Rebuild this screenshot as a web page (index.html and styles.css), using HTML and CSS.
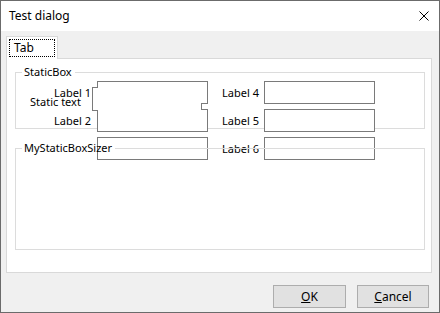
FILE: index.html
```html
<!DOCTYPE html>
<html lang="en">
<head>
    <meta charset="UTF-8">
    <title>Test dialog</title>
    <link rel="stylesheet" href="styles.css">
</head>
<body>
    <div class="window">
        <div class="titlebar">
            <span class="title">Test dialog</span>
            <span class="close">
                <svg width="10" height="10" viewBox="0 0 10 10">
                    <path d="M0.5 0.5 L9.5 9.5 M9.5 0.5 L0.5 9.5" stroke="#000" stroke-width="1" fill="none"/>
                </svg>
            </span>
        </div>
        <div class="client">
            <div class="notebook">
                <div class="tabs">
                    <div class="tab"><span class="tab-label">Tab</span></div>
                </div>
                <div class="page">
                    <fieldset class="staticbox first"><legend>StaticBox</legend></fieldset>
                    <fieldset class="staticbox second"><legend>MyStaticBoxSizer</legend></fieldset>

                    <!-- controls are laid over the boxes, as the dialog draws them -->
                    <div class="controls">
                        <span class="label">Label 1</span>
                        <div class="field"></div>
                        <span class="label">Label 4</span>
                        <div class="field"></div>

                        <span class="label">Label 2</span>
                        <div class="field"></div>
                        <span class="label">Label 5</span>
                        <div class="field"></div>

                        <span class="label"></span>
                        <div class="field"></div>
                        <span class="label">Label 6</span>
                        <div class="field"></div>

                        <span class="static-label">Static text</span>
                        <div class="field static-field"></div>
                    </div>
                </div>
            </div>
            <div class="buttons">
                <button class="btn ok"><u>O</u>K</button>
                <button class="btn cancel"><u>C</u>ancel</button>
            </div>
        </div>
    </div>
</body>
</html>
```

FILE: styles.css
```css
html, body {
    margin: 0;
    padding: 0;
}

body {
    font-family: "Noto Sans", "Open Sans", sans-serif;
    font-size: 11px;
    line-height: 16px;
    color: #000;
}

.window {
    width: 440px;
    height: 313px;
    box-sizing: border-box;
    border: 1px solid #6b6b6b;
    display: flex;
    flex-direction: column;
    background-color: #f0f0f0;
}

.titlebar {
    height: 30px;
    background-color: #fff;
    display: flex;
    align-items: center;
    justify-content: space-between;
    padding: 0 10px 0 8px;
}

.title {
    font-size: 12px;
}

.close {
    display: flex;
}

.client {
    flex: 1;
    display: flex;
    flex-direction: column;
    padding-top: 5px;
}

.notebook {
    margin: 0 7px 0 5px;
}

.tabs {
    display: flex;
}

.tab {
    width: 52px;
    height: 23px;
    box-sizing: border-box;
    border: 1px solid #d9d9d9;
    border-bottom: none;
    background-color: #fff;
    margin-bottom: -1px;
    position: relative;
    z-index: 1;
    padding: 2px 2px 1px 2px;
}

.tab-label {
    display: block;
    height: 18px;
    box-sizing: border-box;
    border: 1px dotted #000;
    padding: 0 0 0 4px;
    line-height: 16px;
    font-size: 12px;
}

.page {
    height: 215px;
    box-sizing: border-box;
    border: 1px solid #d9d9d9;
    background-color: #fff;
    position: relative;
    display: flex;
    flex-direction: column;
}

.staticbox {
    margin: 0 6px 0 8px;
    padding: 0 0 0 6px;
    border: 1px solid #dcdcdc;
    min-width: 0;
    box-sizing: border-box;
}

.staticbox legend {
    padding: 0 3px 0 2px;
    line-height: 16px;
}

.staticbox.first {
    margin-top: 5px;
    height: 65px;
}

.staticbox.second {
    margin-top: 11px;
    height: 110px;
    position: relative;
    z-index: 2;
}

.controls {
    position: absolute;
    left: 8px;
    top: 22px;
    z-index: 1;
    display: grid;
    grid-template-columns: 82px 111px 56px 111px;
    grid-auto-rows: 23px;
    row-gap: 5px;
}

.label {
    align-self: center;
    text-align: right;
    padding-right: 6px;
    line-height: 10px;
    white-space: nowrap;
}

.controls .label:nth-child(4n+3) {
    padding-right: 5px;
}

.field {
    position: relative;
    box-sizing: border-box;
    border: 1px solid #7a7a7a;
}

/* white insides sit above every border, so only the outer outline shows */
.field::after {
    content: "";
    position: absolute;
    inset: 0;
    background-color: #fff;
    z-index: 1;
}

.static-field {
    position: absolute;
    left: 77px;
    top: 6px;
    width: 110px;
    height: 24px;
}

.static-label {
    position: absolute;
    left: 15px;
    top: 16px;
    line-height: 10px;
    white-space: nowrap;
}

.buttons {
    display: flex;
    justify-content: flex-end;
    gap: 11px;
    margin-top: 12px;
    padding-right: 10px;
}

.btn {
    height: 23px;
    padding: 0;
    border: 1px solid #adadad;
    background-color: #e1e1e1;
    font-family: inherit;
    font-size: 12px;
    color: #000;
}

.btn.ok {
    width: 73px;
}

.btn.cancel {
    width: 72px;
}
```
